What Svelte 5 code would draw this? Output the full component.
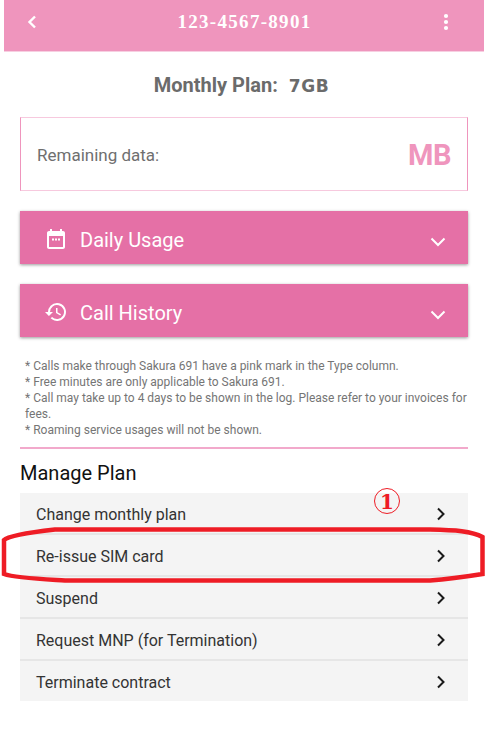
<script>
  const notes = [
    "* Calls make through Sakura 691 have a pink mark in the Type column.",
    "* Free minutes are only applicable to Sakura 691.",
    "* Call may take up to 4 days to be shown in the log. Please refer to your invoices for fees.",
    "* Roaming service usages will not be shown."
  ];
  const menu = [
    "Change monthly plan",
    "Re-issue SIM card",
    "Suspend",
    "Request MNP (for Termination)",
    "Terminate contract"
  ];
</script>

<div class="page">
  <header>
    <svg class="back" viewBox="0 0 12 16" width="12" height="16"><path d="M9 2.500 3.500 8 9 13.500" fill="none" stroke="#fff" stroke-width="2.400"/></svg>
    <span class="number">123-4567-8901</span>
    <svg class="more" viewBox="0 0 6 18" width="6" height="18"><circle cx="3" cy="3" r="2.100" fill="#fff"/><circle cx="3" cy="9" r="2.100" fill="#fff"/><circle cx="3" cy="15" r="2.100" fill="#fff"/></svg>
  </header>

  <main>
    <h2 class="plan">Monthly Plan: <span>7GB</span></h2>

    <div class="remaining">
      <span>Remaining data:</span>
      <strong>MB</strong>
    </div>

    <button class="panel">
      <svg class="icon" viewBox="0 0 24 24" width="24" height="24"><path fill="#fff" d="M19 4h-1V2h-2v2H8V2H6v2H5c-1.100 0-2 .9-2 2v14c0 1.100.9 2 2 2h14c1.100 0 2-.9 2-2V6c0-1.100-.9-2-2-2zm0 16H5V9h14v11zM8 11.500h2v2H8zm3 0h2v2h-2zm3 0h2v2h-2z"/></svg>
      <span>Daily Usage</span>
      <svg class="chev" viewBox="0 0 16 10" width="16" height="10"><path d="M1.500 1.500 8 8l6.500-6.500" fill="none" stroke="#fff" stroke-width="2"/></svg>
    </button>

    <button class="panel">
      <svg class="icon" viewBox="0 0 24 24" width="24" height="24"><path fill="#fff" d="M13 3a9 9 0 0 0-9 9H1l3.890 3.890.07.140L9 12H6a7 7 0 1 1 2.050 4.950l-1.420 1.420A9 9 0 1 0 13 3zm-1 5v5l4.280 2.540.72-1.210-3.500-2.080V8H12z"/></svg>
      <span>Call History</span>
      <svg class="chev" viewBox="0 0 16 10" width="16" height="10"><path d="M1.500 1.500 8 8l6.500-6.500" fill="none" stroke="#fff" stroke-width="2"/></svg>
    </button>

    <div class="notes">
      {#each notes as note}
        <div>{note}</div>
      {/each}
    </div>

    <hr />

    <h3>Manage Plan</h3>

    <ul>
      {#each menu as item}
        <li>
          <span>{item}</span>
          <svg viewBox="0 0 10 14" width="10" height="14"><path d="M2 1.500 7.500 7 2 12.500" fill="none" stroke="#1a1a1a" stroke-width="2"/></svg>
        </li>
      {/each}
    </ul>
  </main>

  <!-- hand drawn annotation on top of the screenshot -->
  <svg class="mark" viewBox="0 0 487 736" width="487" height="736">
    <path d="M55 529.500 L430 529.500 C455 530 472 531 482.500 537 L482.500 574 C470 576 450 579 430 580.500 L65 580.500 C40 579 15 578 4 574 L4 540 C8 536 25 533 55 529.500 Z" fill="none" stroke="#ee1c25" stroke-width="4.500"/>
    <circle cx="387" cy="501" r="12.500" fill="none" stroke="#ee1c25" stroke-width="1"/>
    <text x="387" y="509" text-anchor="middle">1</text>
  </svg>
</div>

<style>
  :global(body) {
    background: #fff;
  }

  .page {
    position: relative;
    width: 487px;
    height: 736px;
    overflow: hidden;
    font-family: Roboto, sans-serif;
  }

  header {
    margin: 0 3px 0 4px;
    height: 52px;
    background: #ef95bd;
    border-bottom: 1px solid #f7cfe1;
    box-sizing: border-box;
    display: flex;
    align-items: center;
    justify-content: space-between;
    padding: 0 35px 7px 22px;
    color: #fff;
  }

  .number {
    margin-left: 8px;
    font-family: "Liberation Serif", serif;
    font-weight: 700;
    font-size: 19px;
    letter-spacing: 1.300px;
  }

  main {
    padding: 0 19px 0 20px;
  }

  .plan {
    margin: 0;
    padding: 20px 5px 0 0;
    height: 44px;
    text-align: center;
    font-size: 20px;
    line-height: 26px;
    font-weight: 700;
    color: #6b6b6b;
  }

  .plan span {
    font-family: "DejaVu Sans", sans-serif;
    font-size: 17px;
    margin-left: 6px;
    letter-spacing: 0.600px;
  }

  .remaining {
    height: 74px;
    box-sizing: border-box;
    margin-top: 1px;
    border: 1px solid #ef95bd;
    border-top-color: #f7c9de;
    border-bottom-color: #f7c9de;
    display: flex;
    align-items: center;
    justify-content: space-between;
    padding: 2px 16px 0;
    font-size: 17px;
    color: #6f6f6f;
  }

  .remaining strong {
    font-size: 29px;
    font-weight: 700;
    color: #ef95bd;
    letter-spacing: -0.500px;
  }

  .panel {
    display: flex;
    align-items: center;
    width: 100%;
    height: 53px;
    margin: 20px 0 0;
    padding: 4px 22px 0 24px;
    border: 0;
    background: #e570a6;
    color: #fff;
    font-family: inherit;
    font-size: 20px;
    box-shadow: 0 1px 3px rgba(0, 0, 0, 0.4);
    text-align: left;
  }

  .panel span {
    margin-left: 12px;
    flex: 1;
  }

  .icon {
    margin-bottom: 2px;
  }

  .chev {
    margin-top: 4px;
  }

  .notes {
    margin-top: 21px;
    padding-left: 5px;
    font-size: 12px;
    line-height: 16px;
    color: #757575;
  }

  hr {
    margin: 9px 0 0;
    height: 2px;
    border: 0;
    background: #f2a9cb;
  }

  h3 {
    margin: 12px 0 0;
    font-size: 20px;
    line-height: 24px;
    font-weight: 400;
    color: #111;
  }

  ul {
    list-style: none;
    margin: 8px 0 0;
    padding: 0;
  }

  li {
    height: 42px;
    box-sizing: border-box;
    display: flex;
    align-items: center;
    justify-content: space-between;
    padding: 3px 22px 0 16px;
    background: #f4f4f4;
    border-bottom: 2px solid #e6e6e6;
    font-size: 16px;
    color: #333;
  }

  li:last-child {
    border-bottom: 0;
    height: 40px;
  }

  li svg {
    margin-bottom: 2px;
  }

  .mark {
    position: absolute;
    left: 0;
    top: 0;
    pointer-events: none;
  }

  .mark text {
    font-family: "DejaVu Serif", serif;
    font-weight: 700;
    font-size: 20px;
    fill: #ee1c25;
  }
</style>
